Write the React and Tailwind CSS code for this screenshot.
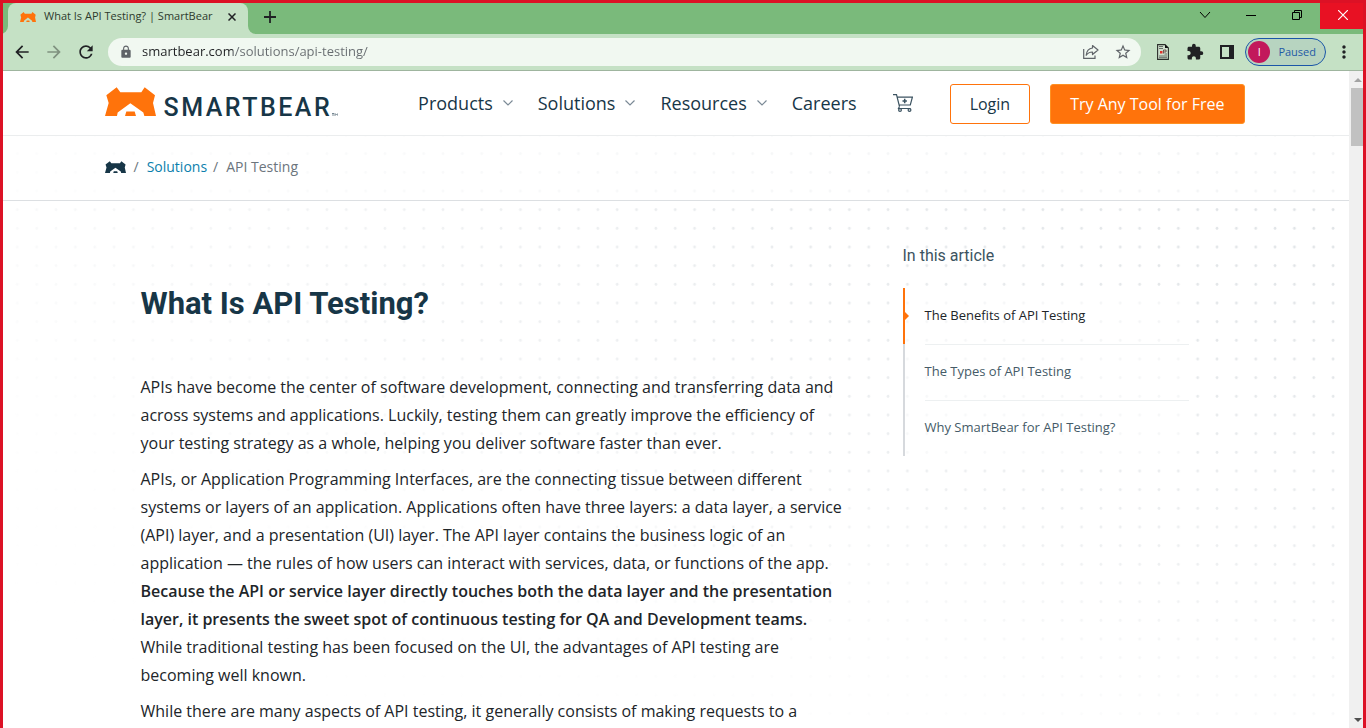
import React from "react";
import {
  MdArrowBack,
  MdArrowForward,
  MdRefresh,
  MdLock,
  MdStarBorder,
  MdExtension,
  MdMoreVert,
} from "react-icons/md";

function BearMark({ className }) {
  return (
    <svg viewBox="0 0 153 84" className={className} fill="currentColor" preserveAspectRatio="none" aria-hidden="true">
      <path d="M0 84 11 46 4 24 35 1 46 15H109L119 1 150 24 144 46 153 84H118L115 74 76 47 38 74 36 84Z" />
      <path d="M60 84 64 71H89L93 84Z" />
    </svg>
  );
}

function WindowButton({ label, className = "", children }) {
  return (
    <button type="button" aria-label={label} className={`flex h-[29px] w-[46px] items-center justify-center ${className}`}>
      {children}
    </button>
  );
}

function TabStrip() {
  return (
    <div className="flex h-[34px] shrink-0 bg-[#c5e1c5] pt-[3px]">
      <div className="w-2 rounded-br-lg bg-[#7aba7b]" />
      <div className="w-60 bg-[#7aba7b]">
        <div className="flex h-full items-center rounded-t-lg bg-[#c5e1c5] pr-2 pb-1 pl-3">
          <BearMark className="h-[10px] w-4 text-[#ff730b]" />
          <span className="ml-2 flex-1 text-[11px] whitespace-nowrap text-[#2d3a2d]">
            What Is API Testing? | SmartBear
          </span>
          <button type="button" aria-label="Close tab" className="flex size-4 items-center justify-center">
            <svg viewBox="0 0 8 8" className="size-2" stroke="#202124" strokeWidth="1.5" fill="none">
              <path d="M.5.5 7.500 7.500M7.500.5.5 7.500" />
            </svg>
          </button>
        </div>
      </div>
      <div className="flex flex-1 items-start justify-between rounded-bl-lg bg-[#7aba7b]">
        <button type="button" aria-label="New tab" className="ml-3 flex h-7 w-5 items-center justify-center">
          <svg viewBox="0 0 12 12" className="size-3" stroke="#202124" strokeWidth="1.8" fill="none">
            <path d="M6 0V12M0 6H12" />
          </svg>
        </button>
        <div className="-mt-[3px] flex text-black">
          <WindowButton label="Search tabs">
            <svg viewBox="0 0 12 8" className="h-2 w-3" stroke="currentColor" fill="none">
              <path d="M1 1 6 6.500 11 1" />
            </svg>
          </WindowButton>
          <WindowButton label="Minimize">
            <svg viewBox="0 0 10 10" className="size-[10px]" stroke="currentColor" fill="none">
              <path d="M0 5.500H10" />
            </svg>
          </WindowButton>
          <WindowButton label="Restore">
            <svg viewBox="0 0 10 10" className="size-[10px]" stroke="currentColor" fill="none">
              <path d="M.5 2.500H7.500V9.500H.5ZM2.500 2.500V.5H9.500V7.500H7.500" />
            </svg>
          </WindowButton>
          <WindowButton label="Close" className="bg-[#e81123] text-white">
            <svg viewBox="0 0 10 10" className="size-[10px]" stroke="currentColor" strokeWidth="1.2" fill="none">
              <path d="M0 0 10 10M10 0 0 10" />
            </svg>
          </WindowButton>
        </div>
      </div>
    </div>
  );
}

function Toolbar() {
  return (
    <div className="flex h-[37px] shrink-0 items-center border-b border-[#9fb59f] bg-[#c5e1c5] pr-3 pl-3 text-[#202124]">
      <button type="button" aria-label="Back" className="mr-3 w-5">
        <MdArrowBack className="size-5" />
      </button>
      <button type="button" aria-label="Forward" className="mr-3 w-5 text-[#7f917f]">
        <MdArrowForward className="size-5" />
      </button>
      <button type="button" aria-label="Reload" className="mr-3 w-5">
        <MdRefresh className="size-5" />
      </button>
      <div className="flex h-7 flex-1 items-center rounded-full bg-[#f1f8f1] pr-2 pl-[11px] text-[#5f6368]">
        <MdLock className="size-[14px]" />
        <input
          type="text"
          aria-label="Address"
          defaultValue="smartbear.com/solutions/api-testing/"
          className="ml-[9px] min-w-0 flex-1 bg-linear-to-r from-[#202124] from-[91px] to-[#666b6f] to-[91px] bg-clip-text text-[13px] text-transparent outline-none"
        />
        <button type="button" aria-label="Share" className="mr-3 flex size-5 items-center justify-center">
          <svg viewBox="0 0 16 16" className="size-4" fill="none" stroke="currentColor" strokeWidth="1.2">
            <path d="M.7 5V14.300H12V11.500" />
            <path d="M9.500 1.500 15 6 9.500 10.500V8C6.500 8 4.500 9.200 3.200 11.300 3.600 7 6 4.400 9.500 4Z" strokeLinejoin="round" />
          </svg>
        </button>
        <button type="button" aria-label="Bookmark" className="flex size-5 items-center justify-center">
          <MdStarBorder className="size-[18px]" />
        </button>
      </div>
      <button type="button" aria-label="Page reader" className="ml-3 flex w-5 items-center justify-center">
        <svg viewBox="0 0 12 16" className="h-4 w-3" fill="none">
          <path d="M.6.6H8L11.400 4V15.400H.6Z" fill="#cfe0cd" stroke="#2b2f2b" strokeWidth="1.1" />
          <path d="M8 .5V4H11.500Z" fill="#111" />
          <path d="M2 2.500H6M2 4.500H6M2 12H10M2 13.700H10M7.500 10H10" stroke="#5a605a" strokeWidth=".9" />
          <path d="M3 7H5.500V9.500H3Z" fill="#e0322a" />
          <path d="M6.500 9.500V6H9V8H7" stroke="#6b4a45" strokeWidth=".9" />
        </svg>
      </button>
      <button type="button" aria-label="Extensions" className="ml-3 flex w-5 items-center justify-center">
        <MdExtension className="size-[18px]" />
      </button>
      <button type="button" aria-label="Side panel" className="ml-3 flex w-5 items-center justify-center">
        <svg viewBox="0 0 14 14" className="size-[14px]" fill="#202124">
          <path d="M0 0H14V14H0ZM2 2V12H9V2Z" fillRule="evenodd" />
        </svg>
      </button>
      <button
        type="button"
        className="ml-2 flex h-7 items-center gap-2 rounded-full border border-[#1a56a8] bg-[#b7d4c0] pr-[9px] pl-[2px] text-[11px] text-[#1f5aa6]"
      >
        <span className="flex size-[22px] items-center justify-center rounded-full bg-[#c2185b] text-white">I</span>
        Paused
      </button>
      <button type="button" aria-label="Menu" className="ml-2 flex w-5 items-center justify-center">
        <MdMoreVert className="size-5" />
      </button>
    </div>
  );
}

function NavItem({ label, menu }) {
  return (
    <a href="#" className="flex items-center gap-[10px]">
      {label}
      {menu && (
        <svg viewBox="0 0 10 6" className="h-[6px] w-[10px]" fill="none" stroke="#7b8a96" strokeWidth="1.200">
          <path d="M.5.5 5 5 9.500.5" />
        </svg>
      )}
    </a>
  );
}

function SiteHeader() {
  return (
    <header className="h-[65px] shrink-0 border-b border-[#ebedee] bg-white">
      <div className="mx-auto flex h-full max-w-[1140px] items-center pt-[2px]">
        <a href="#" aria-label="SmartBear home" className="flex items-end gap-2 pb-[6px] text-[#173647]">
          <BearMark className="h-[29px] w-[51px] text-[#ff730b]" />
          <span className="font-[Roboto] text-[25px] leading-4 font-medium tracking-widest">SMARTBEAR</span>
          <svg viewBox="0 0 6 3" className="-ml-2 h-[3px] w-[6px]" fill="none" stroke="#5b707c" strokeWidth=".8">
            <path d="M0 .5H2M1 .5V3M3 3V.5L4.500 2 6 .5V3" />
          </svg>
        </a>
        <nav className="ml-auto flex items-center gap-[25px] pb-[2px] text-lg text-[#173647]">
          <NavItem label="Products" menu />
          <NavItem label="Solutions" menu />
          <NavItem label="Resources" menu />
          <NavItem label="Careers" />
        </nav>
        <a href="#" aria-label="Cart" className="ml-9 pb-[2px]">
          <svg viewBox="0 0 20 18" className="h-[18px] w-5" fill="none" stroke="#3c5361" strokeWidth="1.200">
            <path d="M0 .7H3.500L6.500 12.500M4.300 3.200H19.400L17.300 11H6M6.500 12.500 5.500 14.500H17.500" />
            <circle cx="7" cy="16" r="1.400" />
            <circle cx="16.500" cy="16" r="1.400" />
            <path d="M11.700 4.800V9.200M9.500 7H13.900" strokeWidth="1.500" />
          </svg>
        </a>
        <a href="#" className="ml-[37px] flex h-10 items-center rounded-[3px] border border-[#ff730b] px-[19px] text-base text-[#173647]">
          Login
        </a>
        <a href="#" className="ml-5 flex h-10 items-center rounded-[3px] border border-[#ff9122] bg-[#ff730b] px-[19px] text-base text-white">
          Try Any Tool for Free
        </a>
      </div>
    </header>
  );
}

function DotField() {
  return (
    <svg className="absolute inset-0 size-full" aria-hidden="true">
      <defs>
        <pattern id="dots" x="7.650" y="8.350" width="19.350" height="18.667" patternUnits="userSpaceOnUse">
          <circle cx="9.670" cy="9.330" r="1.400" fill="#dde1e4" />
        </pattern>
        <linearGradient id="across" x1="0" x2="1" y1="0" y2="0">
          <stop offset="0" stopColor="#fff" stopOpacity=".2" />
          <stop offset=".5" stopColor="#fff" stopOpacity=".65" />
          <stop offset="1" stopColor="#fff" />
        </linearGradient>
        <linearGradient id="down" x1="0" x2="0" y1="0" y2="1">
          <stop offset="0" stopColor="#000" stopOpacity="0" />
          <stop offset=".3" stopColor="#000" stopOpacity=".1" />
          <stop offset=".65" stopColor="#000" stopOpacity=".35" />
          <stop offset="1" stopColor="#000" stopOpacity=".7" />
        </linearGradient>
        <linearGradient id="corner" x1="0.200" x2="0.550" y1="1" y2="0.500">
          <stop offset="0" stopColor="#000" />
          <stop offset=".5" stopColor="#000" stopOpacity=".7" />
          <stop offset="1" stopColor="#000" stopOpacity="0" />
        </linearGradient>
        <mask id="fade">
          <rect width="100%" height="100%" fill="url(#across)" />
          <rect width="100%" height="100%" fill="url(#down)" />
          <rect width="100%" height="100%" fill="url(#corner)" />
        </mask>
      </defs>
      <rect width="100%" height="100%" fill="url(#dots)" mask="url(#fade)" />
    </svg>
  );
}

function Breadcrumb() {
  return (
    <nav aria-label="Breadcrumb" className="relative flex h-[65px] shrink-0 border-b border-[#dcdfe2] bg-white/60">
      <ol className="mx-auto flex w-full max-w-[1140px] items-center gap-2 pb-[2px] text-sm text-[#6c757d]">
        <li>
          <a href="#" aria-label="Home">
            <BearMark className="h-3 w-[21px] text-[#173647]" />
          </a>
        </li>
        <li className="flex gap-2">
          <span>/</span>
          <a href="#" className="text-[#0b7fad]">Solutions</a>
        </li>
        <li className="-ml-[2px] flex gap-2">
          <span>/</span>
          <span>API Testing</span>
        </li>
      </ol>
    </nav>
  );
}

const sections = ["The Benefits of API Testing", "The Types of API Testing", "Why SmartBear for API Testing?"];

function Contents() {
  return (
    <aside className="w-[286px] shrink-0 pt-[43px]">
      <h2 className="font-[Roboto] text-base text-[#3c5361]">In this article</h2>
      <ul className="mt-5 bg-white/60 text-[13px] text-[#455b68]">
        {sections.map((title, index) => (
          <li
            key={title}
            className={
              index === 0
                ? "relative border-l-2 border-[#ff730b] pl-5 text-[#212529]"
                : "border-l-2 border-[#d6d9dd] pl-5"
            }
          >
            {index === 0 && (
              <svg viewBox="0 0 4 8" className="absolute top-6 left-0 h-2 w-1" fill="#ff730b">
                <path d="M0 0 4 4 0 8Z" />
              </svg>
            )}
            <a
              href="#"
              className={
                index > 0
                  ? "flex h-14 items-center border-t border-[#edf0f1] pb-[2px]"
                  : "flex h-14 items-center"
              }
            >
              {title}
            </a>
          </li>
        ))}
      </ul>
    </aside>
  );
}

function Article() {
  return (
    <article className="max-w-[706px] flex-1 text-base leading-7 text-[#212529]">
      <h1 className="pt-[83px] pb-[49px] font-[Roboto] text-[31px] leading-10 font-bold text-[#173647]">
        What Is API Testing?
      </h1>
      <p className="mb-2">
        APIs have become the center of software development, connecting and transferring data and across systems and
        applications. Luckily, testing them can greatly improve the efficiency of your testing strategy as a whole,
        helping you deliver software faster than ever.
      </p>
      <p className="mb-2">
        APIs, or Application Programming Interfaces, are the connecting tissue between different systems or layers of
        an application. Applications often have three layers: a data layer, a service (API) layer, and a presentation
        (UI) layer. The API layer contains the business logic of an application — the rules of how users can interact
        with services, data, or functions of the app.{" "}
        <strong className="font-semibold">
          Because the API or service layer directly touches both the data layer and the presentation layer, it
          presents the sweet spot of continuous testing for QA and Development teams.
        </strong>{" "}
        While traditional testing has been focused on the UI, the advantages of API testing are becoming well known.
      </p>
      <p>While there are many aspects of API testing, it generally consists of making requests to a</p>
    </article>
  );
}

function Scrollbar() {
  return (
    <div className="flex w-[17px] shrink-0 flex-col items-center bg-[#f0f0f0]" aria-hidden="true">
      <div className="flex h-[17px] items-center">
        <svg viewBox="0 0 8 4" className="h-1 w-2" fill="#a3a3a3">
          <path d="M0 4 4 0 8 4Z" />
        </svg>
      </div>
      <div className="h-[58px] w-[13px] bg-[#c1c1c1]" />
      <div className="mt-auto flex h-[17px] items-center">
        <svg viewBox="0 0 8 4" className="h-1 w-2" fill="#505050">
          <path d="M0 0 4 4 8 0Z" />
        </svg>
      </div>
    </div>
  );
}

export default function App() {
  return (
    <div className="relative flex h-screen flex-col overflow-hidden bg-white font-['Open_Sans',sans-serif]">
      <TabStrip />
      <Toolbar />
      <div className="flex min-h-0 flex-1">
        <div className="flex min-w-0 flex-1 flex-col overflow-hidden">
          <SiteHeader />
          <div className="relative flex min-h-0 flex-1 flex-col">
            <DotField />
            <Breadcrumb />
            <main className="relative mx-auto flex w-full max-w-[1140px] justify-between pr-[56px] pl-9">
              <Article />
              <Contents />
            </main>
          </div>
        </div>
        <Scrollbar />
      </div>
      <div className="pointer-events-none absolute inset-0 border-x-[3px] border-t-[3px] border-[#dc1125]" />
    </div>
  );
}
